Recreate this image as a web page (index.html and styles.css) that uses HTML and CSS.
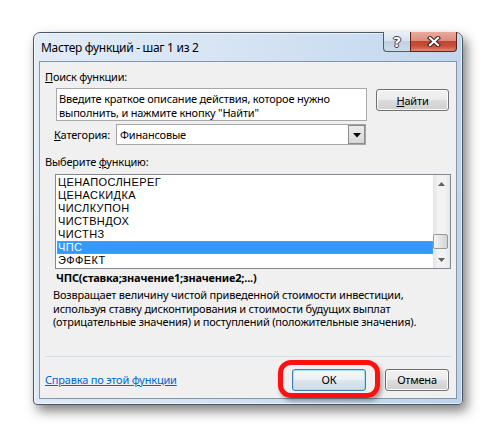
FILE: index.html
```html
<!DOCTYPE html>
<html lang="ru">
<head>
    <meta charset="UTF-8">
    <title>Мастер функций - шаг 1 из 2</title>
    <link rel="stylesheet" href="styles.css">
</head>
<body>
    <div class="window">
        <div class="titlebar">
            <span class="title">Мастер функций - шаг 1 из 2</span>
            <div class="caption">
                <span class="cap-btn help">?</span>
                <span class="cap-btn close">
                    <svg width="14" height="11" viewBox="0 0 14 11">
                        <path d="M3 2 L11 9 M11 2 L3 9" stroke="#3b2320" stroke-width="4.2" stroke-linecap="square"/>
                        <path d="M3 2 L11 9 M11 2 L3 9" stroke="#fff" stroke-width="2.2" stroke-linecap="square"/>
                    </svg>
                </span>
            </div>
        </div>

        <div class="client">
            <div class="label"><u>П</u>оиск функции:</div>

            <div class="search-row">
                <div class="search-box">Введите краткое описание действия, которое нужно<br>выполнить, и нажмите кнопку "Найти"</div>
                <button class="btn find"><u>Н</u>айти</button>
            </div>

            <div class="category-row">
                <span class="cat-label"><u>К</u>атегория:</span>
                <div class="select">
                    <span class="select-value">Финансовые</span>
                    <span class="drop">
                        <svg width="8" height="5" viewBox="0 0 8 5"><path d="M0 0 H8 L4 4.5 Z" fill="#000"/></svg>
                    </span>
                </div>
            </div>

            <div class="label pick">Выберите <u>ф</u>ункцию:</div>

            <div class="listbox">
                <ul class="items">
                    <li>ЦЕНАПОСЛНЕРЕГ</li>
                    <li>ЦЕНАСКИДКА</li>
                    <li>ЧИСЛКУПОН</li>
                    <li>ЧИСТВНДОХ</li>
                    <li>ЧИСТНЗ</li>
                    <li class="selected">ЧПС</li>
                    <li>ЭФФЕКТ</li>
                </ul>
                <div class="scrollbar">
                    <span class="sb-arrow">
                        <svg width="7" height="4" viewBox="0 0 7 4"><path d="M0 4 H7 L3.5 0 Z" fill="#606060"/></svg>
                    </span>
                    <div class="sb-track"><span class="sb-thumb"></span></div>
                    <span class="sb-arrow">
                        <svg width="7" height="4" viewBox="0 0 7 4"><path d="M0 0 H7 L3.5 4 Z" fill="#606060"/></svg>
                    </span>
                </div>
            </div>

            <div class="signature">ЧПС(ставка;значение1;значение2;...)</div>
            <p class="desc">Возвращает величину чистой приведенной стоимости инвестиции,<br>используя ставку дисконтирования и стоимости будущих выплат<br>(отрицательные значения) и поступлений (положительные значения).</p>

            <div class="separator"></div>

            <div class="bottom-row">
                <a href="#" class="help-link">Справка по этой функции</a>
                <div class="ok-wrap">
                    <button class="btn ok">ОК</button>
                    <span class="highlight"></span>
                </div>
                <button class="btn cancel">Отмена</button>
            </div>
        </div>
    </div>
</body>
</html>
```

FILE: styles.css
```css
* {
    margin: 0;
    padding: 0;
    box-sizing: border-box;
}
body {
    width: 497px;
    height: 439px;
    overflow: hidden;
    background: #fff;
    padding: 32px 0 0 33px;
    font-family: "Noto Sans", "Open Sans", sans-serif;
    font-size: 11px;
    letter-spacing: -0.2px;
    color: #000;
}
.window {
    width: 430px;
    height: 373px;
    border: 1px solid #4a5866;
    border-radius: 7px 7px 4px 4px;
    padding: 0 5px 5px;
    background: linear-gradient(100deg, #e2ecf7 0%, #d4e3f3 45%, #bcd3ec 100%);
    box-shadow: 4px 6px 12px rgba(0,0,0,0.5), inset 0 0 0 1px rgba(255,255,255,0.6);
}
.titlebar {
    height: 28px;
    display: flex;
    align-items: center;
    padding-left: 2px;
}
.title {
    flex: 1;
    font-size: 12px;
    letter-spacing: -0.3px;
}
.caption {
    align-self: flex-start;
    margin-top: -1px;
    display: flex;
}
.cap-btn {
    height: 20px;
    display: flex;
    align-items: center;
    justify-content: center;
    border: 1px solid #4f5d6b;
    border-top: none;
}
.help {
    width: 27px;
    border-right: none;
    border-radius: 0 0 0 4px;
    background: linear-gradient(#eaf0f7 0%, #d9e3ee 45%, #c1d0e0 50%, #cedbe9 100%);
    color: #fff;
    font-family: "DejaVu Sans", sans-serif;
    font-weight: bold;
    font-size: 14px;
    letter-spacing: 0;
    text-shadow: 1px 0 #36414e, -1px 0 #36414e, 0 1px #36414e, 0 -1px #36414e;
}
.close {
    width: 47px;
    border-color: #5a241d;
    border-radius: 0 0 4px 0;
    background: linear-gradient(#eaa99b 0%, #da8f7f 45%, #c3432f 50%, #c8503b 75%, #de8b70 100%);
}
.client {
    height: 338px;
    border: 1px solid #8496aa;
    background: #f0f0f0;
    padding: 8px 5px 0;
}
.label {
    line-height: 14px;
}
.search-row {
    display: flex;
    margin-top: 4px;
}
.search-box {
    width: 311px;
    height: 33px;
    margin-left: 11px;
    border: 1px solid #a8a8a8;
    background: #fff;
    padding: 3px 2px 0;
    line-height: 14px;
    white-space: nowrap;
    overflow: hidden;
}
.btn {
    height: 22px;
    font-family: inherit;
    font-size: 11px;
    letter-spacing: inherit;
    color: #000;
    border: 1px solid #707070;
    border-radius: 3px;
    background: linear-gradient(#f2f2f2 0%, #ebebeb 50%, #dddddd 50%, #cfcfcf 100%);
    box-shadow: inset 0 0 0 1px #fbfbfb;
}
.find {
    width: 73px;
    margin: 1px 0 0 9px;
}
.category-row {
    display: flex;
    align-items: center;
    margin-top: 3px;
}
.cat-label {
    width: 62px;
    margin-left: 9px;
}
.select {
    width: 250px;
    height: 21px;
    display: flex;
    align-items: center;
    border: 1px solid #a5a5a5;
    background: #fff;
}
.select-value {
    flex: 1;
    padding-left: 3px;
}
.drop {
    width: 17px;
    height: 19px;
    display: flex;
    align-items: center;
    justify-content: center;
    border: 1px solid #8c8c8c;
    border-width: 1px 0 0 1px;
    box-shadow: inset -1px -1px 0 #8c8c8c;
    background: linear-gradient(#ececec, #d6d6d6);
}
.pick {
    margin-top: 10px;
}
.listbox {
    width: 396px;
    height: 95px;
    margin: 5px 0 0 10px;
    border: 1px solid #828790;
    background: #fff;
    display: flex;
}
.items {
    flex: 1;
    list-style: none;
    padding-top: 1px;
    font-family: "Liberation Sans", Arial, sans-serif;
    letter-spacing: 0.4px;
}
.items li {
    height: 13px;
    line-height: 13px;
    padding-left: 2px;
}
.items .selected {
    margin-left: 1px;
    padding-left: 1px;
    background: #3399ff;
    color: #fff;
    outline: 1px dotted #c98a3a;
    outline-offset: -1px;
}
.scrollbar {
    width: 17px;
    display: flex;
    flex-direction: column;
    background: linear-gradient(90deg, #e3e3e3, #f2f2f2 30%, #f2f2f2 70%, #e6e6e6);
}
.sb-arrow {
    height: 17px;
    display: flex;
    align-items: center;
    justify-content: center;
}
.sb-track {
    flex: 1;
    display: flex;
    flex-direction: column;
    justify-content: flex-end;
    padding-bottom: 2px;
}
.sb-thumb {
    width: 15px;
    height: 15px;
    border: 1px solid #979797;
    border-radius: 2px;
    background: linear-gradient(90deg, #f5f5f5, #e4e4e4 50%, #d4d4d4);
}
.signature {
    margin: 2px 0 0 11px;
    font-weight: bold;
    line-height: 14px;
}
.desc {
    margin: 3px 0 0 8px;
    line-height: 13.5px;
    white-space: nowrap;
}
.separator {
    height: 1px;
    margin: 27px -1px 0 0;
    background: #d5dfe6;
}
.bottom-row {
    display: flex;
    align-items: center;
    margin-top: 12px;
}
.help-link {
    color: #0066cc;
    text-decoration: underline;
}
.ok-wrap {
    position: relative;
    margin-left: auto;
}
.ok {
    width: 74px;
    display: block;
    border-color: #3c7fb1;
    box-shadow: inset 0 0 0 1px #a8dcf5;
    background: linear-gradient(#f4f8fb 0%, #eaf1f6 50%, #dde6ed 50%, #d0dbe4 100%);
}
.highlight {
    position: absolute;
    left: -14px;
    top: -9px;
    width: 102px;
    height: 38px;
    border: 5px solid #ff1010;
    border-radius: 13px;
    box-shadow: 2px 3px 4px rgba(0,0,0,0.35);
}
.cancel {
    width: 64px;
    margin: 0 2px 0 19px;
}
```
